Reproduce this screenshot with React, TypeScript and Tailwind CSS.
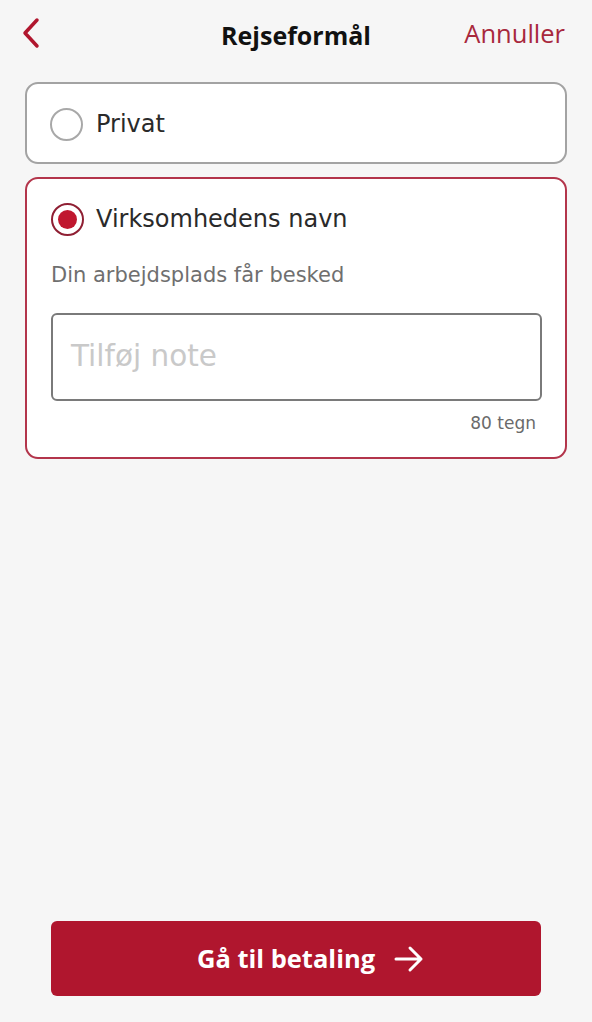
import React from "react";

export default function App() {
  return (
    <div className="w-[592px] h-[1022px] bg-[#f6f6f6] flex flex-col" style={{ fontFamily: '"DejaVu Sans", sans-serif' }}>
      <div className="relative h-[68px] flex items-center justify-between pl-[20px] pr-[27px]">
        <svg width="22" height="32" viewBox="0 0 22 32" className="mt-[-2px]">
          <path d="M17 3 L5 16 L17 29" fill="none" stroke="#b0162e" strokeWidth="3.5" strokeLinecap="round" strokeLinejoin="round" />
        </svg>
        <div className="absolute left-0 right-0 top-[17px] text-center text-[25px] font-bold text-[#111]" style={{ fontFamily: '"Open Sans", sans-serif' }}>
          Rejseformål
        </div>
        <div className="text-[25.5px] text-[#a8283d] mt-[-2px]" style={{ fontFamily: '"Open Sans", sans-serif' }}>Annuller</div>
      </div>
      <div className="px-[25px] pt-[14px] flex flex-col gap-[13px]">
        <div className="h-[82px] bg-white border-2 border-[#a3a3a3] rounded-[13px] flex items-center pl-[23px] pt-[2px]">
          <div className="w-[33px] h-[33px] rounded-full border-2 border-[#a8a8a8]" />
          <span className="ml-[13px] text-[24px] text-[#2a2a2a]">Privat</span>
        </div>
        <div className="h-[282px] bg-white border-2 border-[#b3354b] rounded-[13px] pl-[24px] pr-[23px] pt-[22px]">
          <div className="flex items-center">
            <div className="w-[33px] h-[33px] rounded-full border-[2.5px] border-[#8f1f33] flex items-center justify-center">
              <div className="w-[19px] h-[19px] rounded-full bg-[#c0172f]" />
            </div>
            <span className="ml-[12px] text-[24px] text-[#2a2a2a]">Virksomhedens navn</span>
          </div>
          <div className="mt-[23px] text-[21px] text-[#6f6f6f]">Din arbejdsplads får besked</div>
          <div className="mt-[21px] h-[88px] border-2 border-[#7a7a7a] rounded-[6px] flex items-center pl-[18px]">
            <span className="text-[29.5px] text-[#c9c9c9]">Tilføj note</span>
          </div>
          <div className="mt-[10px] text-right pr-[6px] text-[17px] text-[#6a6a6a]">80 tegn</div>
        </div>
      </div>
      <div className="flex-1" />
      <div className="px-[51px] pb-[26px]">
        <div className="h-[75px] bg-[#b0162e] rounded-[6px] flex items-center justify-center gap-[18px] pl-[30px]">
          <span className="text-[25.5px] font-bold text-white" style={{ fontFamily: '"Open Sans", sans-serif' }}>Gå til betaling</span>
          <svg width="32" height="28" viewBox="0 0 32 28">
            <path d="M3 14 H28 M17 3 L28 14 L17 25" fill="none" stroke="white" strokeWidth="3" strokeLinecap="round" strokeLinejoin="round" />
          </svg>
        </div>
      </div>
    </div>
  );
}
